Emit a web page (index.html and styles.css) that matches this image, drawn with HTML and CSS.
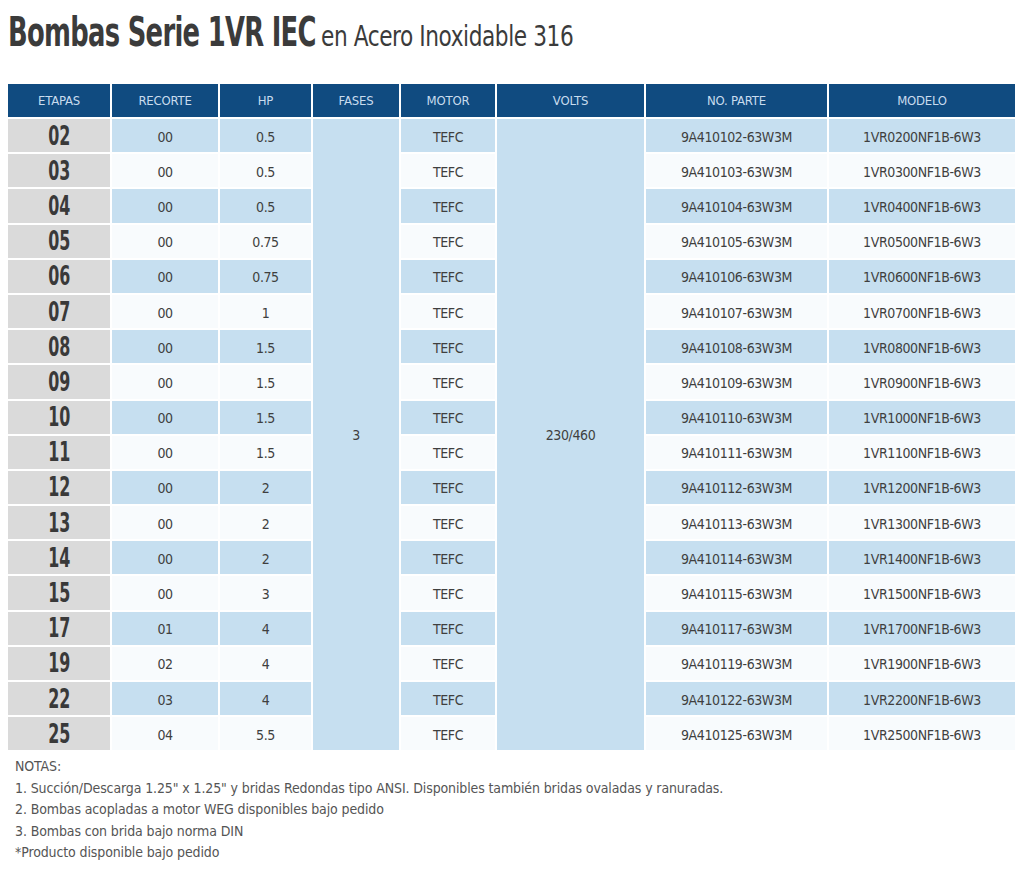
FILE: index.html
```html
<!DOCTYPE html>
<html lang="es">
<head>
<meta charset="utf-8">
<title>Bombas Serie 1VR IEC</title>
<link rel="stylesheet" href="styles.css">
</head>
<body>
<h1 class="title"><span class="title-main">Bombas Serie 1VR IEC</span><span class="title-sub">en Acero Inoxidable 316</span></h1>
<div class="table">
  <div class="th">ETAPAS</div>
  <div class="th">RECORTE</div>
  <div class="th">HP</div>
  <div class="th">FASES</div>
  <div class="th">MOTOR</div>
  <div class="th">VOLTS</div>
  <div class="th">NO. PARTE</div>
  <div class="th">MODELO</div>
  <div class="merged fases">3</div>
  <div class="merged volts">230/460</div>

  <div class="row alt"><div class="et"><span>02</span></div><div class="c">00</div><div class="c">0.5</div><div class="c">TEFC</div><div class="c">9A410102-63W3M</div><div class="c">1VR0200NF1B-6W3</div></div>
  <div class="row"><div class="et"><span>03</span></div><div class="c">00</div><div class="c">0.5</div><div class="c">TEFC</div><div class="c">9A410103-63W3M</div><div class="c">1VR0300NF1B-6W3</div></div>
  <div class="row alt"><div class="et"><span>04</span></div><div class="c">00</div><div class="c">0.5</div><div class="c">TEFC</div><div class="c">9A410104-63W3M</div><div class="c">1VR0400NF1B-6W3</div></div>
  <div class="row"><div class="et"><span>05</span></div><div class="c">00</div><div class="c">0.75</div><div class="c">TEFC</div><div class="c">9A410105-63W3M</div><div class="c">1VR0500NF1B-6W3</div></div>
  <div class="row alt"><div class="et"><span>06</span></div><div class="c">00</div><div class="c">0.75</div><div class="c">TEFC</div><div class="c">9A410106-63W3M</div><div class="c">1VR0600NF1B-6W3</div></div>
  <div class="row"><div class="et"><span>07</span></div><div class="c">00</div><div class="c">1</div><div class="c">TEFC</div><div class="c">9A410107-63W3M</div><div class="c">1VR0700NF1B-6W3</div></div>
  <div class="row alt"><div class="et"><span>08</span></div><div class="c">00</div><div class="c">1.5</div><div class="c">TEFC</div><div class="c">9A410108-63W3M</div><div class="c">1VR0800NF1B-6W3</div></div>
  <div class="row"><div class="et"><span>09</span></div><div class="c">00</div><div class="c">1.5</div><div class="c">TEFC</div><div class="c">9A410109-63W3M</div><div class="c">1VR0900NF1B-6W3</div></div>
  <div class="row alt"><div class="et"><span>10</span></div><div class="c">00</div><div class="c">1.5</div><div class="c">TEFC</div><div class="c">9A410110-63W3M</div><div class="c">1VR1000NF1B-6W3</div></div>
  <div class="row"><div class="et"><span>11</span></div><div class="c">00</div><div class="c">1.5</div><div class="c">TEFC</div><div class="c">9A410111-63W3M</div><div class="c">1VR1100NF1B-6W3</div></div>
  <div class="row alt"><div class="et"><span>12</span></div><div class="c">00</div><div class="c">2</div><div class="c">TEFC</div><div class="c">9A410112-63W3M</div><div class="c">1VR1200NF1B-6W3</div></div>
  <div class="row"><div class="et"><span>13</span></div><div class="c">00</div><div class="c">2</div><div class="c">TEFC</div><div class="c">9A410113-63W3M</div><div class="c">1VR1300NF1B-6W3</div></div>
  <div class="row alt"><div class="et"><span>14</span></div><div class="c">00</div><div class="c">2</div><div class="c">TEFC</div><div class="c">9A410114-63W3M</div><div class="c">1VR1400NF1B-6W3</div></div>
  <div class="row"><div class="et"><span>15</span></div><div class="c">00</div><div class="c">3</div><div class="c">TEFC</div><div class="c">9A410115-63W3M</div><div class="c">1VR1500NF1B-6W3</div></div>
  <div class="row alt"><div class="et"><span>17</span></div><div class="c">01</div><div class="c">4</div><div class="c">TEFC</div><div class="c">9A410117-63W3M</div><div class="c">1VR1700NF1B-6W3</div></div>
  <div class="row"><div class="et"><span>19</span></div><div class="c">02</div><div class="c">4</div><div class="c">TEFC</div><div class="c">9A410119-63W3M</div><div class="c">1VR1900NF1B-6W3</div></div>
  <div class="row alt"><div class="et"><span>22</span></div><div class="c">03</div><div class="c">4</div><div class="c">TEFC</div><div class="c">9A410122-63W3M</div><div class="c">1VR2200NF1B-6W3</div></div>
  <div class="row"><div class="et"><span>25</span></div><div class="c">04</div><div class="c">5.5</div><div class="c">TEFC</div><div class="c">9A410125-63W3M</div><div class="c">1VR2500NF1B-6W3</div></div>
</div>
<div class="notes">
  <p>NOTAS:</p>
  <p>1. Succión/Descarga 1.25" x 1.25" y bridas Redondas tipo ANSI. Disponibles también bridas ovaladas y ranuradas.</p>
  <p>2. Bombas acopladas a motor WEG disponibles bajo pedido</p>
  <p>3. Bombas con brida bajo norma DIN</p>
  <p>*Producto disponible bajo pedido</p>
</div>
</body>
</html>
```

FILE: styles.css
```css
html, body {
  margin: 0;
  padding: 0;
  background: #ffffff;
}

body {
  font-family: "DejaVu Sans Condensed", "DejaVu Sans", sans-serif;
  font-stretch: condensed;
  color: #3a3a3a;
  padding: 8px 8px 0 8px;
}

.title {
  margin: 0;
  height: 76px;
  box-sizing: border-box;
  padding-top: 4px;
  display: flex;
  align-items: baseline;
  font-weight: normal;
  color: #3b3b3b;
  line-height: 40px;
  white-space: nowrap;
}

.title-main {
  display: inline-block;
  font-weight: bold;
  font-size: 41px;
  letter-spacing: -1px;
  transform: scaleX(0.70);
  transform-origin: left center;
  margin-right: -132px;
}

.title-sub {
  display: inline-block;
  margin-left: 5px;
  font-size: 29px;
  letter-spacing: -0.5px;
  transform: scaleX(0.83);
  transform-origin: left center;
}

.table {
  display: grid;
  grid-template-columns: 102px 106px 91px 86px 94px 147px 181px 186px;
  grid-template-rows: 33px;
  grid-auto-rows: 33.2px;
  column-gap: 2px;
  row-gap: 2px;
  width: 1007px;
}

.th {
  background: #104b80;
  color: #c9dcee;
  font-size: 13px;
  letter-spacing: -0.2px;
  display: flex;
  align-items: center;
  justify-content: center;
}

.row {
  display: contents;
}

.et {
  grid-column: 1;
  background: #dadada;
  color: #393939;
  font-weight: bold;
  font-size: 26px;
  display: flex;
  align-items: center;
  justify-content: center;
}

.et span {
  display: inline-block;
  transform: scaleX(0.68);
}

.c {
  background: #f8fbfd;
  font-size: 14px;
  letter-spacing: -0.4px;
  color: #3f3f3f;
  display: flex;
  align-items: center;
  justify-content: center;
  padding-top: 2px;
}

.alt .c {
  background: #c6dff0;
}

.merged {
  background: #c6dff0;
  font-size: 14px;
  letter-spacing: -0.4px;
  color: #3f3f3f;
  display: flex;
  align-items: center;
  justify-content: center;
}

.fases {
  grid-column: 4;
  grid-row: 2 / span 18;
}

.volts {
  grid-column: 6;
  grid-row: 2 / span 18;
}

.notes {
  padding: 6px 0 0 7px;
  font-size: 14px;
  letter-spacing: -0.12px;
  color: #555555;
  line-height: 21.5px;
}

.notes p {
  margin: 0;
}
```
